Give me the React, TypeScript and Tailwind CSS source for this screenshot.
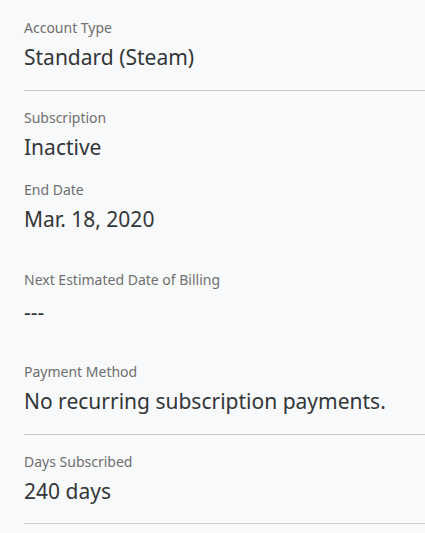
import React from "react";

function Field({
    label,
    value,
    className,
    valueGap = "mt-[6px]",
}: {
    label: string;
    value: string;
    className?: string;
    valueGap?: string;
}): JSX.Element {
    return (
        <div className={className}>
            <p className="text-[14px] leading-[18px] text-[#6f6f6f]">{label}</p>
            <p className={`${valueGap} text-[21px] leading-[28px] text-[#333638]`}>{value}</p>
        </div>
    );
}

export default function App(): JSX.Element {
    return (
        <div
            className="min-h-screen bg-[#f8f9fa] pl-6"
            style={{ fontFamily: '"Noto Sans", "Open Sans", sans-serif' }}
        >
            <div className="border-b border-[#c8cacc] pt-[19px] pb-[19px]">
                <Field label="Account Type" value="Standard (Steam)" />
            </div>
            <div className="border-b border-[#c8cacc] pt-[18px] pb-[19px]">
                <Field label="Subscription" value="Inactive" />
                <Field className="mt-[20px]" label="End Date" value="Mar. 18, 2020" />
                <Field
                    className="mt-[38px]"
                    label="Next Estimated Date of Billing"
                    value="---"
                    valueGap="mt-[9px]"
                />
                <Field className="mt-[37px]" label="Payment Method" value="No recurring subscription payments." />
            </div>
            <div className="border-b border-[#c8cacc] pt-[18px] pb-[18px]">
                <Field label="Days Subscribed" value="240 days" />
            </div>
        </div>
    );
}
